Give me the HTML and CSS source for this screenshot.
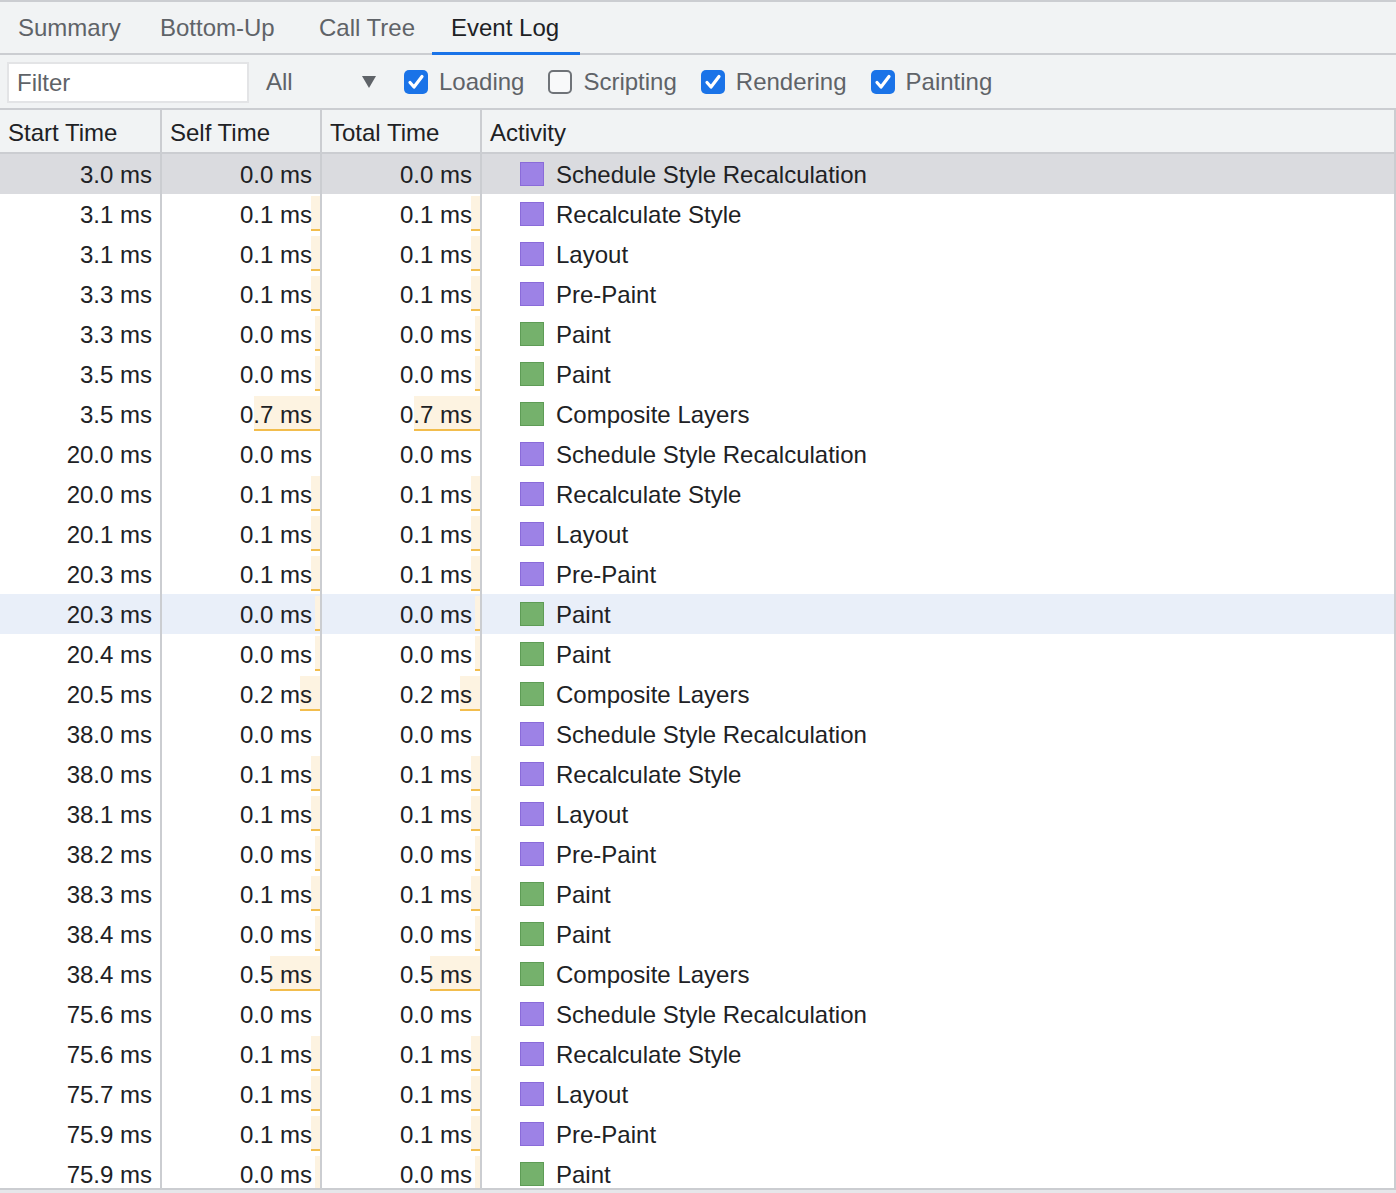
FILE: index.html
```html
<!DOCTYPE html>
<html>
<head>
<meta charset="utf-8">
<link rel="stylesheet" href="styles.css">
</head>
<body>
<div class="tabs">
  <div class="tab t1">Summary</div>
  <div class="tab t2">Bottom-Up</div>
  <div class="tab t3">Call Tree</div>
  <div class="tab t4 selected">Event Log</div>
</div>
<div class="toolbar">
  <div class="filter">Filter</div>
  <div class="select"><span>All</span><span class="arrow"></span></div>
  <label class="check"><span class="box on"><svg viewBox="0 0 24 24" width="24" height="24"><path d="M6 12.5 L10 17 L18 6.5" fill="none" stroke="#fff" stroke-width="3.2" stroke-linecap="round" stroke-linejoin="round"/></svg></span>Loading</label>
  <label class="check"><span class="box off"></span>Scripting</label>
  <label class="check"><span class="box on"><svg viewBox="0 0 24 24" width="24" height="24"><path d="M6 12.5 L10 17 L18 6.5" fill="none" stroke="#fff" stroke-width="3.2" stroke-linecap="round" stroke-linejoin="round"/></svg></span>Rendering</label>
  <label class="check"><span class="box on"><svg viewBox="0 0 24 24" width="24" height="24"><path d="M6 12.5 L10 17 L18 6.5" fill="none" stroke="#fff" stroke-width="3.2" stroke-linecap="round" stroke-linejoin="round"/></svg></span>Painting</label>
</div>
<div class="table">
  <div class="row head">
    <div class="c c1">Start Time</div>
    <div class="c c2">Self Time</div>
    <div class="c c3">Total Time</div>
    <div class="c c4">Activity</div>
  </div>
  <div class="body">
    <div class="row sel"><div class="c c1">3.0 ms</div><div class="c c2">0.0 ms</div><div class="c c3">0.0 ms</div><div class="c c4"><span class="sq p"></span>Schedule Style Recalculation</div></div>
    <div class="row"><div class="c c1">3.1 ms</div><div class="c c2"><span class="bar" style="width:9px"></span><span class="t">0.1 ms</span></div><div class="c c3"><span class="bar" style="width:9px"></span><span class="t">0.1 ms</span></div><div class="c c4"><span class="sq p"></span>Recalculate Style</div></div>
    <div class="row"><div class="c c1">3.1 ms</div><div class="c c2"><span class="bar" style="width:9px"></span><span class="t">0.1 ms</span></div><div class="c c3"><span class="bar" style="width:9px"></span><span class="t">0.1 ms</span></div><div class="c c4"><span class="sq p"></span>Layout</div></div>
    <div class="row"><div class="c c1">3.3 ms</div><div class="c c2"><span class="bar" style="width:9px"></span><span class="t">0.1 ms</span></div><div class="c c3"><span class="bar" style="width:9px"></span><span class="t">0.1 ms</span></div><div class="c c4"><span class="sq p"></span>Pre-Paint</div></div>
    <div class="row"><div class="c c1">3.3 ms</div><div class="c c2"><span class="bar" style="width:5px"></span><span class="t">0.0 ms</span></div><div class="c c3"><span class="bar" style="width:5px"></span><span class="t">0.0 ms</span></div><div class="c c4"><span class="sq g"></span>Paint</div></div>
    <div class="row"><div class="c c1">3.5 ms</div><div class="c c2"><span class="bar" style="width:5px"></span><span class="t">0.0 ms</span></div><div class="c c3"><span class="bar" style="width:5px"></span><span class="t">0.0 ms</span></div><div class="c c4"><span class="sq g"></span>Paint</div></div>
    <div class="row"><div class="c c1">3.5 ms</div><div class="c c2"><span class="bar" style="width:66px"></span><span class="t">0.7 ms</span></div><div class="c c3"><span class="bar" style="width:66px"></span><span class="t">0.7 ms</span></div><div class="c c4"><span class="sq g"></span>Composite Layers</div></div>
    <div class="row"><div class="c c1">20.0 ms</div><div class="c c2">0.0 ms</div><div class="c c3">0.0 ms</div><div class="c c4"><span class="sq p"></span>Schedule Style Recalculation</div></div>
    <div class="row"><div class="c c1">20.0 ms</div><div class="c c2"><span class="bar" style="width:9px"></span><span class="t">0.1 ms</span></div><div class="c c3"><span class="bar" style="width:9px"></span><span class="t">0.1 ms</span></div><div class="c c4"><span class="sq p"></span>Recalculate Style</div></div>
    <div class="row"><div class="c c1">20.1 ms</div><div class="c c2"><span class="bar" style="width:9px"></span><span class="t">0.1 ms</span></div><div class="c c3"><span class="bar" style="width:9px"></span><span class="t">0.1 ms</span></div><div class="c c4"><span class="sq p"></span>Layout</div></div>
    <div class="row"><div class="c c1">20.3 ms</div><div class="c c2"><span class="bar" style="width:9px"></span><span class="t">0.1 ms</span></div><div class="c c3"><span class="bar" style="width:9px"></span><span class="t">0.1 ms</span></div><div class="c c4"><span class="sq p"></span>Pre-Paint</div></div>
    <div class="row hov"><div class="c c1">20.3 ms</div><div class="c c2"><span class="bar" style="width:5px"></span><span class="t">0.0 ms</span></div><div class="c c3"><span class="bar" style="width:5px"></span><span class="t">0.0 ms</span></div><div class="c c4"><span class="sq g"></span>Paint</div></div>
    <div class="row"><div class="c c1">20.4 ms</div><div class="c c2"><span class="bar" style="width:5px"></span><span class="t">0.0 ms</span></div><div class="c c3"><span class="bar" style="width:5px"></span><span class="t">0.0 ms</span></div><div class="c c4"><span class="sq g"></span>Paint</div></div>
    <div class="row"><div class="c c1">20.5 ms</div><div class="c c2"><span class="bar" style="width:20px"></span><span class="t">0.2 ms</span></div><div class="c c3"><span class="bar" style="width:20px"></span><span class="t">0.2 ms</span></div><div class="c c4"><span class="sq g"></span>Composite Layers</div></div>
    <div class="row"><div class="c c1">38.0 ms</div><div class="c c2">0.0 ms</div><div class="c c3">0.0 ms</div><div class="c c4"><span class="sq p"></span>Schedule Style Recalculation</div></div>
    <div class="row"><div class="c c1">38.0 ms</div><div class="c c2"><span class="bar" style="width:9px"></span><span class="t">0.1 ms</span></div><div class="c c3"><span class="bar" style="width:9px"></span><span class="t">0.1 ms</span></div><div class="c c4"><span class="sq p"></span>Recalculate Style</div></div>
    <div class="row"><div class="c c1">38.1 ms</div><div class="c c2"><span class="bar" style="width:9px"></span><span class="t">0.1 ms</span></div><div class="c c3"><span class="bar" style="width:9px"></span><span class="t">0.1 ms</span></div><div class="c c4"><span class="sq p"></span>Layout</div></div>
    <div class="row"><div class="c c1">38.2 ms</div><div class="c c2"><span class="bar" style="width:5px"></span><span class="t">0.0 ms</span></div><div class="c c3"><span class="bar" style="width:5px"></span><span class="t">0.0 ms</span></div><div class="c c4"><span class="sq p"></span>Pre-Paint</div></div>
    <div class="row"><div class="c c1">38.3 ms</div><div class="c c2"><span class="bar" style="width:9px"></span><span class="t">0.1 ms</span></div><div class="c c3"><span class="bar" style="width:9px"></span><span class="t">0.1 ms</span></div><div class="c c4"><span class="sq g"></span>Paint</div></div>
    <div class="row"><div class="c c1">38.4 ms</div><div class="c c2"><span class="bar" style="width:5px"></span><span class="t">0.0 ms</span></div><div class="c c3"><span class="bar" style="width:5px"></span><span class="t">0.0 ms</span></div><div class="c c4"><span class="sq g"></span>Paint</div></div>
    <div class="row"><div class="c c1">38.4 ms</div><div class="c c2"><span class="bar" style="width:50px"></span><span class="t">0.5 ms</span></div><div class="c c3"><span class="bar" style="width:50px"></span><span class="t">0.5 ms</span></div><div class="c c4"><span class="sq g"></span>Composite Layers</div></div>
    <div class="row"><div class="c c1">75.6 ms</div><div class="c c2">0.0 ms</div><div class="c c3">0.0 ms</div><div class="c c4"><span class="sq p"></span>Schedule Style Recalculation</div></div>
    <div class="row"><div class="c c1">75.6 ms</div><div class="c c2"><span class="bar" style="width:9px"></span><span class="t">0.1 ms</span></div><div class="c c3"><span class="bar" style="width:9px"></span><span class="t">0.1 ms</span></div><div class="c c4"><span class="sq p"></span>Recalculate Style</div></div>
    <div class="row"><div class="c c1">75.7 ms</div><div class="c c2"><span class="bar" style="width:9px"></span><span class="t">0.1 ms</span></div><div class="c c3"><span class="bar" style="width:9px"></span><span class="t">0.1 ms</span></div><div class="c c4"><span class="sq p"></span>Layout</div></div>
    <div class="row"><div class="c c1">75.9 ms</div><div class="c c2"><span class="bar" style="width:9px"></span><span class="t">0.1 ms</span></div><div class="c c3"><span class="bar" style="width:9px"></span><span class="t">0.1 ms</span></div><div class="c c4"><span class="sq p"></span>Pre-Paint</div></div>
    <div class="row"><div class="c c1">75.9 ms</div><div class="c c2"><span class="bar" style="width:5px"></span><span class="t">0.0 ms</span></div><div class="c c3"><span class="bar" style="width:5px"></span><span class="t">0.0 ms</span></div><div class="c c4"><span class="sq g"></span>Paint</div></div>
  </div>
</div>
<div class="footer"></div>
</body>
</html>
```
FILE: styles.css
```css
* { box-sizing: border-box; }
html, body { margin: 0; padding: 0; }
body {
  width: 1396px;
  height: 1193px;
  overflow: hidden;
  background: #fff;
  font-family: "Liberation Sans", Arial, sans-serif;
  font-size: 24px;
  color: #202124;
}
.tabs {
  display: flex;
  height: 55px;
  background: #f1f3f4;
  border-top: 2px solid #cbcdd1;
  border-bottom: 2px solid #cbcdd1;
}
.tab {
  position: relative;
  display: flex;
  align-items: center;
  padding-top: 1px;
  color: #5f6368;
  white-space: nowrap;
}
.t1 { width: 140px; padding-left: 18px; }
.t2 { width: 160px; padding-left: 20px; }
.t3 { width: 132px; padding-left: 19px; }
.t4 { width: 148px; padding-left: 19px; }
.tab.selected { color: #202124; }
.tab.selected::after {
  content: "";
  position: absolute;
  left: 0;
  right: 0;
  bottom: -2px;
  height: 3px;
  background: #1a73e8;
}
.toolbar {
  display: flex;
  align-items: center;
  height: 55px;
  background: #f1f3f4;
  border-bottom: 2px solid #cbcdd1;
  padding-left: 7px;
  padding-top: 1px;
}
.filter {
  width: 242px;
  height: 41px;
  background: #fff;
  border: 2px solid #e3e4e6;
  color: #5f6368;
  padding-left: 8px;
  padding-top: 1px;
  display: flex;
  align-items: center;
}
.select {
  display: flex;
  align-items: center;
  margin-left: 17px;
  width: 114px;
  color: #5f6368;
}
.select .arrow {
  margin-left: 69px;
  width: 0;
  height: 0;
  border-left: 7px solid transparent;
  border-right: 7px solid transparent;
  border-top: 12px solid #5f6368;
}
.check {
  display: flex;
  align-items: center;
  color: #5f6368;
  margin-left: 24px;
}
.box {
  width: 24px;
  height: 24px;
  border-radius: 5px;
  margin-right: 11px;
  display: flex;
  margin-top: -1px;
}
.box.on { background: #1a73e8; }
.box.off { background: #f8f9fa; border: 2px solid #6f7378; }
.table {
  height: 1078px;
  overflow: hidden;
}
.row {
  display: flex;
  height: 40px;
}
.row.head {
  height: 44px;
  background: #f1f3f4;
  border-bottom: 2px solid #cbcdd1;
}
.body { height: 1034px; overflow: hidden; }
.c {
  position: relative;
  display: flex;
  align-items: center;
  justify-content: flex-end;
  border-right: 2px solid #cbcdd1;
  padding-right: 8px;
  padding-top: 2px;
  white-space: nowrap;
}
.c1 { width: 162px; }
.c2 { width: 160px; }
.c3 { width: 160px; }
.c4 { flex: 1; justify-content: flex-start; padding-left: 38px; }
.c4 .sq { margin-top: -2px; }
.head .c { justify-content: flex-start; padding-left: 8px; padding-top: 3px; }
.row.sel { background: #dadbdf; }
.row.hov { background: #e9eff9; }
.bar {
  position: absolute;
  right: 0;
  top: 2px;
  bottom: 3px;
  background: #fdf3e1;
  border-bottom: 2px solid #f2bd4d;
}
.t { position: relative; }
.sq {
  width: 24px;
  height: 24px;
  margin-right: 12px;
  flex: none;
}
.sq.p { background: #9d82e6; border: 1px solid #8a6bd9; }
.sq.g { background: #75b16c; border: 1px solid #5e9c56; }
.footer {
  height: 5px;
  background: #e6e7ea;
  border-top: 2px solid #cbcdd1;
}
```
